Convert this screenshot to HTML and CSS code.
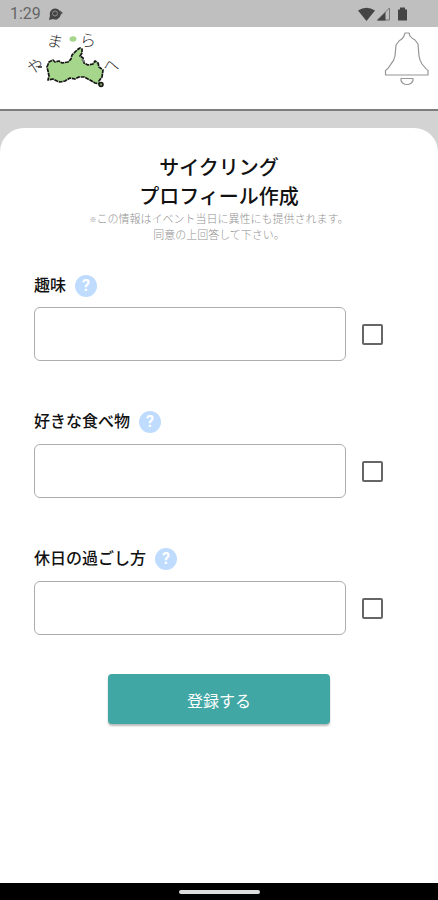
FILE: index.html
```html
<!DOCTYPE html>
<html lang="ja">
<head>
<meta charset="utf-8">
<meta name="viewport" content="width=device-width, initial-scale=1">
<title>サイクリング プロフィール作成</title>
<link rel="stylesheet" href="styles.css">
</head>
<body>
<div class="status">
  <span class="clock">1:29</span>
  <svg class="status-app" width="16" height="14" viewBox="0 0 16 14"><path d="M1 13l1-4.500A5.500 5.500 0 1 1 5 12z" fill="#444"/><circle cx="7" cy="6.500" r="2.500" fill="#444" stroke="#8d8d8d"/><path d="M12 3.500l3 2.500-3 2z" fill="#555"/></svg>
  <svg class="status-icons" width="50" height="16" viewBox="0 0 50 16"><path d="M0 4.500Q8.500-1 17 4.500L8.500 15z" fill="#444"/><path d="M31.500 2v12H19.500z" fill="none" stroke="#777"/><path d="M27.500 6v8.500H19z" fill="#444"/><path d="M40 3.500h2V1.500h5v2h2V14.500h-9z" fill="#444"/></svg>
</div>
<header class="header">
  <svg class="logo" width="96" height="60" viewBox="0 0 96 60">
    <g class="logo-text">
      <text x="-8" y="6" transform="translate(9 37) rotate(-12)">や</text>
      <text x="-8" y="6" transform="translate(29 12) rotate(12)">ま</text>
      <text x="-8" y="6" transform="translate(62 11)">ら</text>
      <text x="-8" y="7" transform="translate(85 35) rotate(-8)">へ</text>
    </g>
    <path d="M12 38h4" stroke="#222" stroke-width="1.500"/>
    <ellipse cx="47" cy="10" rx="3.500" ry="2.800" fill="#a5d68c"/>
    <path d="M21 38l2-5 4-2 2 2 4-1 3 2 6-1 3-3 1-4 5-5 3-2 2 1v4l-2 3 3 2 1 5 4 2 5-1 2-3 3 2 1 4 4 3-1 7-3 4 1 3-5-1-5-3-6-3h-5l-4 2-5-1-5 3-5 1-3-1-4-2-5 1 1-4-1-5z" fill="#a5d68c" stroke="#151515" stroke-width="1.700" stroke-linejoin="round" stroke-dasharray="4 .7"/>
    <path d="M56 30l2 3" stroke="#777" stroke-width="2"/>
    <circle cx="75" cy="55.500" r="2" fill="#769653" stroke="#151515" stroke-width="1.500"/>
  </svg>
  <svg class="bell" width="46" height="54" viewBox="0 0 46 54" fill="none" stroke="#969696" stroke-width="1.200" stroke-linejoin="round"><path d="M20 4l1-3h4l1 3q2 2.500 5 4l3 4 1 12q.5 4 3 8 4 5 6 6.500V43H1.500v-4.500Q4 37 7 32q3-3 4-8l1-11 3-4q4-2 5-5z"/><path d="M17 46.500h12v2q-1.500 4-6 4t-6-4z"/></svg>
</header>
<main class="backdrop">
  <form class="card">
    <h1 class="title">サイクリング<br>プロフィール作成</h1>
    <p class="note"><span class="mark">※</span>この情報はイベント当日に異性にも提供されます。<br>同意の上回答して下さい。</p>
    <div class="field">
      <div class="field-head"><label id="hobby-label" for="hobby">趣味</label><button type="button" class="help">?</button></div>
      <div class="field-row"><input class="text" id="hobby" type="text"><input class="check" type="checkbox" aria-labelledby="hobby-label"></div>
    </div>
    <div class="field">
      <div class="field-head"><label id="food-label" for="food">好きな食べ物</label><button type="button" class="help">?</button></div>
      <div class="field-row"><input class="text" id="food" type="text"><input class="check" type="checkbox" aria-labelledby="food-label"></div>
    </div>
    <div class="field">
      <div class="field-head"><label id="holiday-label" for="holiday">休日の過ごし方</label><button type="button" class="help">?</button></div>
      <div class="field-row"><input class="text" id="holiday" type="text"><input class="check" type="checkbox" aria-labelledby="holiday-label"></div>
    </div>
    <button class="submit" type="submit">登録する</button>
  </form>
</main>
<footer class="nav"><span class="handle"></span></footer>
</body>
</html>
```
FILE: styles.css
```css
* { box-sizing: border-box; }

body {
  margin: 0;
  min-height: 100vh;
  display: flex;
  flex-direction: column;
  background: #fff;
  color: #111;
  font-family: Roboto, "Noto Sans CJK JP", sans-serif;
}

.status {
  height: 27px;
  padding: 0 30px 0 10px;
  display: flex;
  align-items: center;
  gap: 7px;
  background: #bfbfbf;
}

.clock {
  color: #666;
  font-size: 16px;
  line-height: 27px;
}

.status-icons { margin-left: auto; }

.header {
  height: 84px;
  padding: 2px 8px 0 26px;
  display: flex;
  justify-content: space-between;
  align-items: flex-start;
  border-bottom: 2px solid #7d7d7d;
}

.bell { margin-top: 3px; }

.logo { overflow: visible; }

.logo-text {
  font-family: "Noto Sans CJK JP", sans-serif;
  font-size: 16px;
  font-weight: 300;
  fill: #333;
}

.backdrop {
  flex: 1;
  display: flex;
  padding-top: 17px;
  background: linear-gradient(#d3d3d3 50px, #fff 50px);
}

.card {
  flex: 1;
  padding: 26px 34px 24px;
  border-radius: 24px 24px 0 0;
  background: #fff;
}

.title,
.note {
  margin: 0;
  text-align: center;
}

.title {
  font-size: 20px;
  font-weight: 500;
  line-height: 29px;
}

.note {
  margin-bottom: 31px;
  color: #929292;
  font-size: 11px;
  font-weight: 300;
  line-height: 16px;
  white-space: nowrap;
}

.mark {
  font-size: 7px;
  vertical-align: 1px;
}

.field { margin-bottom: 50px; }

.field:last-of-type { margin-bottom: 39px; }

.field-head {
  height: 22px;
  margin-bottom: 10px;
  display: flex;
  align-items: center;
  gap: 9px;
  font-size: 16px;
  font-weight: 500;
  line-height: 22px;
}

.field + .field .field-head { margin-bottom: 11px; }

.help {
  width: 22px;
  height: 22px;
  padding: 0;
  border: 0;
  border-radius: 50%;
  background: #bfdcff;
  color: #fff;
  font: 700 16px/22px Roboto, sans-serif;
}

.field-row {
  display: flex;
  align-items: center;
  gap: 16px;
  padding-right: 21px;
}

.text {
  flex: 1;
  min-width: 0;
  height: 54px;
  padding: 0 12px;
  border: 1px solid #adadad;
  border-radius: 6px;
  background: #fff;
  font: 16px "Noto Sans CJK JP", sans-serif;
}

.check {
  appearance: none;
  width: 21px;
  height: 21px;
  margin: 0;
  border: 2px solid #666;
  border-radius: 2px;
}

.submit {
  display: block;
  width: 60%;
  height: 50px;
  margin: 0 auto;
  border: 0;
  border-radius: 4px;
  background: #41a7a5;
  box-shadow: 0 2px 2px #bbb;
  color: #fff;
  font: 400 16px/50px "Noto Sans CJK JP", sans-serif;
}

.nav {
  height: 17px;
  display: flex;
  justify-content: center;
  align-items: center;
  background: #000;
}

.handle {
  width: 81px;
  height: 4px;
  border-radius: 2px;
  background: #ddd;
}
```
